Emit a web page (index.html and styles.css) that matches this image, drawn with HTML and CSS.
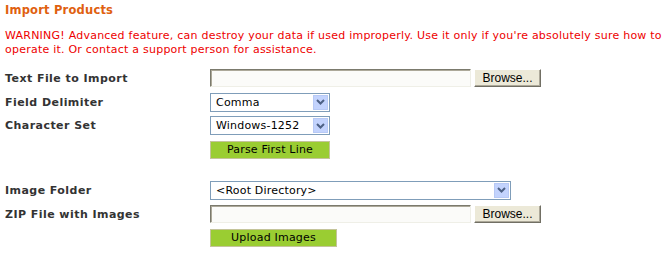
FILE: index.html
```html
<!DOCTYPE html>
<html lang="en">
<head>
  <meta charset="UTF-8">
  <title>Import Products</title>
  <link rel="stylesheet" href="styles.css">
</head>
<body>
 <div class="page">
  <h1 class="title">Import Products</h1>
  <p class="warning">WARNING! Advanced feature, can destroy your data if used improperly. Use it only if you're absolutely sure how to operate it. Or contact a support person for assistance.</p>

  <div class="form">
    <label class="lbl">Text File to Import</label>
    <div class="field">
      <span class="file"></span>
      <span class="browse">Browse...</span>
    </div>

    <label class="lbl">Field Delimiter</label>
    <div class="field">
      <div class="select w120"><span class="val">Comma</span><span class="arr"><svg width="9" height="6" viewBox="0 0 9 6"><path d="M1 1 L4.5 4.5 L8 1" fill="none" stroke="#4d6185" stroke-width="2"/></svg></span></div>
    </div>

    <label class="lbl">Character Set</label>
    <div class="field">
      <div class="select w120"><span class="val">Windows-1252</span><span class="arr"><svg width="9" height="6" viewBox="0 0 9 6"><path d="M1 1 L4.5 4.5 L8 1" fill="none" stroke="#4d6185" stroke-width="2"/></svg></span></div>
    </div>

    <span></span>
    <div class="field"><span class="btn w120">Parse First Line</span></div>

    <div class="spacer"></div>

    <label class="lbl">Image Folder</label>
    <div class="field">
      <div class="select w301"><span class="val">&lt;Root Directory&gt;</span><span class="arr"><svg width="9" height="6" viewBox="0 0 9 6"><path d="M1 1 L4.5 4.5 L8 1" fill="none" stroke="#4d6185" stroke-width="2"/></svg></span></div>
    </div>

    <label class="lbl">ZIP File with Images</label>
    <div class="field">
      <span class="file"></span>
      <span class="browse">Browse...</span>
    </div>

    <span></span>
    <div class="field"><span class="btn w127">Upload Images</span></div>
  </div>
 </div>
</body>
</html>
```

FILE: styles.css
```css
*{margin:0;padding:0;box-sizing:border-box;}
body{background:#fff;font-family:"DejaVu Sans",Verdana,sans-serif;font-size:11px;color:#222;letter-spacing:0.2px;}
.page{padding:2px 5px 0 5px;width:665px;}

.title{font-size:11.5px;font-weight:bold;color:#e0600f;line-height:17px;letter-spacing:0.2px;}
.warning{color:#ee0000;line-height:14px;margin-top:10px;width:660px;letter-spacing:0.23px;}

.form{
  display:grid;
  grid-template-columns:205px 1fr;
  grid-template-rows:24px 24px 23px 26px 15px 24px 24px 24px;
  align-items:center;
  margin-top:9px;
}
.spacer{grid-column:1 / 3;}
.lbl{font-weight:bold;color:#333;letter-spacing:0.45px;}
.field{display:flex;align-items:center;gap:3px;}

.file{
  display:block;
  width:261px;
  height:18px;
  background:#fbfbf9;
  border:1px solid;
  border-color:#7b7a6d #efefe7 #efefe7 #7b7a6d;
  box-shadow:inset 1px 1px 0 #aca899;
}
.browse{
  display:block;
  width:67px;
  height:18px;
  line-height:16px;
  text-align:center;
  font-family:"Liberation Sans",Arial,sans-serif;
  font-size:12px;
  letter-spacing:0;
  color:#000;
  background:#ece9d8;
  border:1px solid;
  border-color:#fff #716f64 #716f64 #fff;
  box-shadow:inset -1px -1px 0 #aca899;
}

.select{
  display:flex;
  align-items:center;
  height:19px;
  background:#fff;
  border:1px solid #7f9db9;
  padding:1px;
}
.w120{width:120px;}
.w301{width:301px;}
.w127{width:127px;}
.select .val{flex:1;padding-left:4px;color:#000;}
.select .arr{
  width:15px;
  height:15px;
  display:flex;
  align-items:center;
  justify-content:center;
  background:#c3d3fd;
  border:1px solid #b7c9f5;
}

.btn{
  display:block;
  height:18px;
  line-height:16px;
  text-align:center;
  color:#000;
  background:#9acd32;
  border:1px solid #c4c49a;
}
```
